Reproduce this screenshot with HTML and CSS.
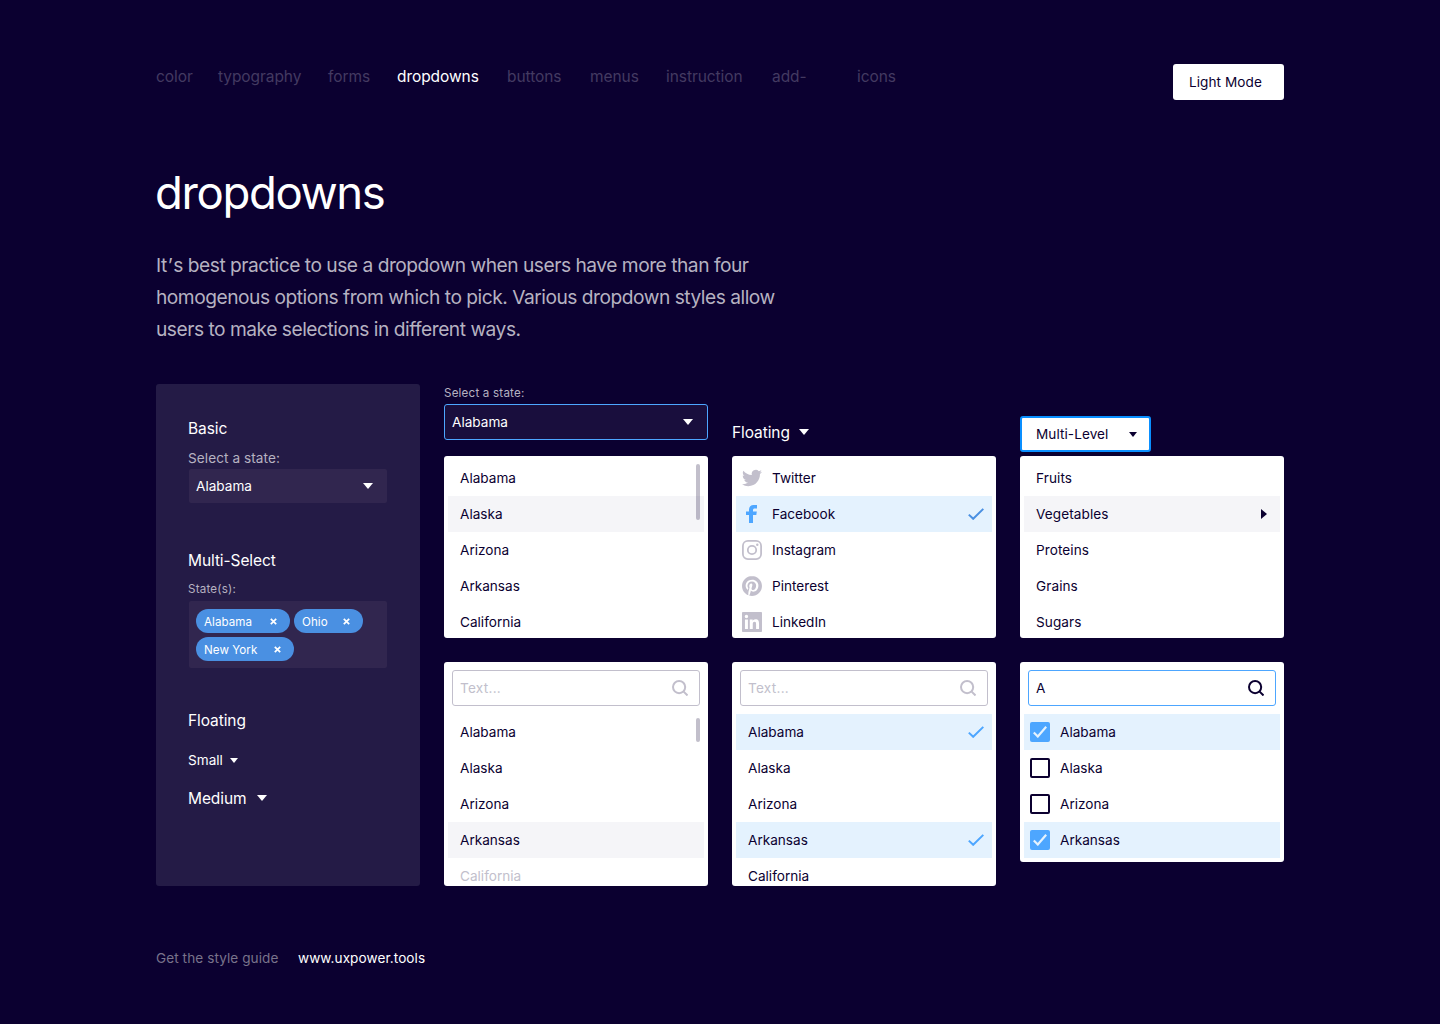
FILE: index.html
```html
<!DOCTYPE html>
<html lang="en">
<head>
<meta charset="utf-8">
<title>dropdowns</title>
<link rel="stylesheet" href="styles.css">
</head>
<body>
<svg class="sprite" aria-hidden="true">
  <symbol id="down" viewBox="0 0 10 6"><path d="M0 0h10L5 6z"/></symbol>
  <symbol id="right" viewBox="0 0 6 10"><path d="M0 0v10l6-5z"/></symbol>
  <symbol id="x" viewBox="0 0 7 7"><path d="M.8 .8l5.4 5.4M6.2 .8L.8 6.2" fill="none" stroke="currentColor" stroke-width="1.7"/></symbol>
  <symbol id="check" viewBox="0 0 16 12"><path d="M.8 6.6l4.4 4.2L15.3 .9" fill="none" stroke="currentColor" stroke-width="2"/></symbol>
  <symbol id="tick" viewBox="0 0 14 12"><path d="M.8 6.5l4 4L13.2 .8" fill="none" stroke="currentColor" stroke-width="2.2"/></symbol>
  <symbol id="search" viewBox="0 0 16 16"><g fill="none" stroke="currentColor" stroke-width="2"><circle cx="7.1" cy="7.1" r="6.1"/><path d="M11.4 11.4l4.1 4.1"/></g></symbol>
  <symbol id="twitter" viewBox="0 0 24 24"><path d="M23.953 4.57a10 10 0 01-2.825.775 4.958 4.958 0 002.163-2.723c-.951.555-2.005.959-3.127 1.184a4.92 4.92 0 00-8.384 4.482C7.69 8.095 4.067 6.13 1.64 3.162a4.822 4.822 0 00-.666 2.475c0 1.71.87 3.213 2.188 4.096a4.904 4.904 0 01-2.228-.616v.06a4.923 4.923 0 003.946 4.827 4.996 4.996 0 01-2.212.085 4.936 4.936 0 004.604 3.417 9.867 9.867 0 01-6.102 2.105c-.39 0-.779-.023-1.17-.067a13.995 13.995 0 007.557 2.209c9.053 0 13.998-7.496 13.998-13.985 0-.21 0-.42-.015-.63A9.935 9.935 0 0024 4.59z"/></symbol>
  <symbol id="facebook" viewBox="0 0 11 18"><path d="M3 18V10H0V6.6h3V4.8C3 1.6 4.8 0 7.6 0H11v3.4H8.8C7.5 3.4 7 4 7 5v1.6h3.8L10.3 10H7v8z"/></symbol>
  <symbol id="instagram" viewBox="0 0 20 20"><g fill="none" stroke="currentColor" stroke-width="1.8"><rect x=".9" y=".9" width="18.2" height="18.2" rx="5"/><circle cx="10" cy="10" r="4.2"/></g><circle cx="15.3" cy="4.7" r="1.2"/></symbol>
  <symbol id="pinterest" viewBox="0 0 24 24"><path d="M12.017 0C5.396 0 .029 5.367.029 11.987c0 5.079 3.158 9.417 7.618 11.162-.105-.949-.199-2.403.041-3.439.219-.937 1.406-5.957 1.406-5.957s-.359-.72-.359-1.781c0-1.663.967-2.911 2.168-2.911 1.024 0 1.518.769 1.518 1.688 0 1.029-.653 2.567-.992 3.992-.285 1.193.6 2.165 1.775 2.165 2.128 0 3.768-2.245 3.768-5.487 0-2.861-2.063-4.869-5.008-4.869-3.41 0-5.409 2.562-5.409 5.199 0 1.033.394 2.143.889 2.741.099.12.112.225.085.345-.09.375-.293 1.199-.334 1.363-.053.225-.172.271-.401.165-1.495-.69-2.433-2.878-2.433-4.646 0-3.776 2.748-7.252 7.92-7.252 4.158 0 7.392 2.967 7.392 6.923 0 4.135-2.607 7.462-6.233 7.462-1.214 0-2.354-.629-2.758-1.379l-.749 2.848c-.269 1.045-1.004 2.352-1.498 3.146 1.123.345 2.306.535 3.55.535 6.607 0 11.985-5.365 11.985-11.987C23.97 5.39 18.592.026 11.985.026L12.017 0z"/></symbol>
  <symbol id="linkedin" viewBox="0 0 24 24"><path d="M20.447 20.452h-3.554v-5.569c0-1.328-.027-3.037-1.852-3.037-1.853 0-2.136 1.445-2.136 2.939v5.667H9.351V9h3.414v1.561h.046c.477-.9 1.637-1.85 3.37-1.85 3.601 0 4.267 2.37 4.267 5.455v6.286zM5.337 7.433a2.062 2.062 0 01-2.063-2.065 2.064 2.064 0 112.063 2.065zm1.782 13.019H3.555V9h3.564v11.452zM23 0H1C.4 0 0 .4 0 1v22c0 .6.4 1 1 1h22c.6 0 1-.4 1-1V1c0-.6-.4-1-1-1z"/></symbol>
</svg>

<div class="page">
  <header class="top">
    <nav class="nav">
      <a>color</a><a>typography</a><a>forms</a><a class="active">dropdowns</a><a>buttons</a><a>menus</a><a>instruction</a><a>add-</a><a>icons</a>
    </nav>
    <button class="mode">Light Mode</button>
  </header>

  <h1>dropdowns</h1>
  <p class="intro">It<span class="apostrophe">’</span>s best practice to use a dropdown when users have more than four<br>homogenous options from which to pick. Various dropdown styles allow<br>users to make selections in different ways.</p>

  <main class="board">
    <section class="panel">
      <h2>Basic</h2>
      <label class="label label-md">Select a state:</label>
      <div class="field">Alabama<svg class="caret"><use href="#down"/></svg></div>

      <h2 class="multi">Multi-Select</h2>
      <label class="label label-sm">State(s):</label>
      <div class="tags">
        <span class="tag">Alabama<svg class="x"><use href="#x"/></svg></span>
        <span class="tag ohio">Ohio<svg class="x"><use href="#x"/></svg></span>
        <span class="tag york">New York<svg class="x"><use href="#x"/></svg></span>
      </div>

      <h2 class="float">Floating</h2>
      <div class="trigger small">Small<svg class="caret caret-sm"><use href="#down"/></svg></div>
      <div class="trigger medium"><span>Medium</span><svg class="caret"><use href="#down"/></svg></div>
    </section>

    <section class="column">
      <div class="head">
        <label class="label label-sm above">Select a state:</label>
        <div class="field open">Alabama<svg class="caret"><use href="#down"/></svg></div>
      </div>
      <div class="menu">
        <ul>
          <li>Alabama</li>
          <li class="hover">Alaska</li>
          <li>Arizona</li>
          <li>Arkansas</li>
          <li>California</li>
        </ul>
        <span class="scrollbar"></span>
      </div>
      <div class="menu tall">
        <div class="search">Text...<svg><use href="#search"/></svg></div>
        <ul>
          <li>Alabama</li>
          <li>Alaska</li>
          <li>Arizona</li>
          <li class="hover">Arkansas</li>
          <li class="faded">California</li>
        </ul>
        <span class="scrollbar short"></span>
      </div>
    </section>

    <section class="column">
      <div class="head">
        <div class="trigger lone"><span>Floating</span><svg class="caret"><use href="#down"/></svg></div>
      </div>
      <ul class="menu icons">
        <li><svg class="icon"><use href="#twitter"/></svg>Twitter</li>
        <li class="selected"><svg class="icon fb"><use href="#facebook"/></svg>Facebook<svg class="check deep"><use href="#check"/></svg></li>
        <li><svg class="icon"><use href="#instagram"/></svg>Instagram</li>
        <li><svg class="icon"><use href="#pinterest"/></svg>Pinterest</li>
        <li><svg class="icon"><use href="#linkedin"/></svg>LinkedIn</li>
      </ul>
      <div class="menu tall">
        <div class="search">Text...<svg><use href="#search"/></svg></div>
        <ul>
          <li class="selected">Alabama<svg class="check"><use href="#check"/></svg></li>
          <li>Alaska</li>
          <li>Arizona</li>
          <li class="selected">Arkansas<svg class="check"><use href="#check"/></svg></li>
          <li>California</li>
        </ul>
      </div>
    </section>

    <section class="column">
      <div class="head">
        <button class="level">Multi-Level<svg class="caret caret-sm"><use href="#down"/></svg></button>
      </div>
      <ul class="menu foods">
        <li>Fruits</li>
        <li class="hover">Vegetables<svg class="arrow"><use href="#right"/></svg></li>
        <li>Proteins</li>
        <li>Grains</li>
        <li>Sugars</li>
      </ul>
      <div class="menu fit icons">
        <div class="search focus">A<svg><use href="#search"/></svg></div>
        <ul>
          <li class="selected"><span class="box on"><svg><use href="#tick"/></svg></span>Alabama</li>
          <li><span class="box"></span>Alaska</li>
          <li><span class="box"></span>Arizona</li>
          <li class="selected"><span class="box on"><svg><use href="#tick"/></svg></span>Arkansas</li>
        </ul>
      </div>
    </section>
  </main>

  <footer class="foot"><span>Get the style guide</span><a>www.uxpower.tools</a></footer>
</div>
</body>
</html>
```
FILE: styles.css
```css
:root {
  --ink: #0b0030;
  --sky: #4da6ff;
  --mist: #c2bfcc;
}

* { box-sizing: border-box; }

body {
  margin: 0;
  background: var(--ink);
  color: #fff;
  font: 13.6px/20px Inter, "Liberation Sans", sans-serif;
}

h1, h2, p, ul { margin: 0; padding: 0; font-weight: 400; }
ul { list-style: none; }
svg { display: block; fill: currentColor; flex: none; }
button { font: inherit; border: 0; text-align: left; }
.sprite { position: absolute; width: 0; height: 0; }

.page { width: 1128px; margin: 0 auto; padding-top: 64px; }

.top { display: flex; justify-content: space-between; height: 36px; }
.nav {
  display: grid;
  grid-template-columns: 62px 110px 69px 110px 83px 76px 106px 85px 60px;
  padding-top: 1px;
  font-size: 15.5px;
  line-height: 24px;
  letter-spacing: -.07px;
  color: #433a61;
}
.nav .active { color: #fff; }
.mode {
  width: 111px;
  padding: 0 16px;
  border-radius: 3px;
  background: #fff;
  color: var(--ink);
  letter-spacing: .06px;
}

h1 { margin: 64px 0 0 -1px; font-size: 45.5px; line-height: 58px; letter-spacing: -1.37px; }
.intro {
  margin-top: 27px;
  font-size: 19.2px;
  line-height: 32px;
  letter-spacing: -.49px;
  color: #b6b2c1;
  white-space: nowrap;
}
.apostrophe { padding: 0 1px; }

.board {
  display: grid;
  grid-template-columns: repeat(4, 264px);
  gap: 24px;
  margin-top: 39px;
}

.panel {
  display: flex;
  flex-direction: column;
  height: 502px;
  padding: 33px 32px 31px;
  border-radius: 3px;
  background: #241b46;
}
h2 { font-size: 15.5px; line-height: 24px; letter-spacing: -.09px; }
.label { display: block; color: #b6b2c1; }
.label-md { margin-top: 7px; letter-spacing: .07px; }
.label-sm { font-size: 11.6px; line-height: 16px; letter-spacing: .2px; }
.above { padding-top: 1px; }
.field {
  display: flex;
  align-items: center;
  justify-content: space-between;
  width: 198px;
  height: 34px;
  margin: 1px 0 0 1px;
  padding: 0 14px 0 7px;
  border-radius: 2px;
  background: #31264f;
}
.field.open {
  width: 264px;
  height: 36px;
  margin: 3px 0 0;
  border: 1px solid var(--sky);
  border-radius: 3px;
  background: #190e3d;
}
.caret { width: 10px; height: 6px; }
.caret-sm { width: 8px; height: 5px; }

.multi { margin-top: 46px; }
.multi + .label { margin-top: 8px; }
.tags {
  display: flex;
  flex-wrap: wrap;
  align-content: flex-start;
  gap: 4px;
  width: 198px;
  height: 67px;
  margin: 4px 0 0 1px;
  padding: 8px 7px;
  border-radius: 2px;
  background: #31264f;
}
.tag {
  display: flex;
  align-items: center;
  justify-content: space-between;
  width: 94px;
  height: 24px;
  padding: 1px 13px 0 8px;
  border-radius: 12px;
  background: #4a90e2;
  font-size: 11.6px;
  letter-spacing: .06px;
}
.ohio { width: 69px; }
.york { width: 98px; }
.x { width: 7px; height: 7px; margin-top: -1px; }

.float { margin-top: 41px; }
.trigger { display: flex; align-items: center; }
.small { gap: 7px; margin-top: 17px; }
.medium, .lone { font-size: 15.5px; line-height: 24px; letter-spacing: -.09px; }
.medium span, .lone span { padding-top: 1px; margin-bottom: -1px; }
.medium { gap: 10.5px; margin-top: 16px; }

.column { display: flex; flex-direction: column; gap: 24px; }
.head { height: 72px; margin-bottom: -24px; }
.lone { gap: 9px; padding-top: 36px; }
.level {
  display: flex;
  align-items: center;
  justify-content: space-between;
  width: 131px;
  height: 36px;
  margin-top: 32px;
  padding: 0 12px 0 14px;
  border: 2px solid #0a8fff;
  border-radius: 3px;
  background: #fff;
  color: var(--ink);
  letter-spacing: .06px;
}

.menu {
  position: relative;
  height: 182px;
  padding: 4px;
  overflow: hidden;
  border-radius: 3px;
  background: #fff;
  color: var(--ink);
}
.tall { height: 224px; }
.fit { height: 200px; }
.foods { letter-spacing: .08px; }
.menu li { display: flex; align-items: center; height: 36px; padding: 0 8px 0 12px; }
.icons li { gap: 10px; padding-left: 6px; }
.menu .hover { background: #f5f5f8; }
.menu .selected { background: #e4f2fe; }
.menu .faded { color: var(--mist); }

.icon { width: 20px; height: 20px; color: var(--mist); }
.icon.fb { width: 11px; height: 18px; margin: 0 5px 0 4px; color: var(--sky); }
.check { width: 16px; height: 12px; margin-left: auto; color: var(--sky); }
.deep { color: #4a90e2; }
.arrow { width: 6px; height: 10px; margin: 0 5px 0 auto; }

.scrollbar {
  position: absolute;
  top: 8px;
  right: 8px;
  width: 4px;
  height: 56px;
  border-radius: 2px;
  background: rgba(11, 0, 48, .25);
}
.scrollbar.short { top: 56px; height: 24px; }

.search {
  display: flex;
  align-items: center;
  justify-content: space-between;
  height: 36px;
  margin: 4px 4px 8px;
  padding: 0 11px 0 7px;
  border: 1px solid var(--mist);
  border-radius: 3px;
  color: var(--mist);
  letter-spacing: .25px;
}
.search svg { width: 16px; height: 16px; }
.search.focus { border-color: var(--sky); color: var(--ink); }

.box { width: 20px; height: 20px; border: 2px solid var(--ink); border-radius: 2px; }
.box.on {
  display: flex;
  align-items: center;
  justify-content: center;
  border: 0;
  background: var(--sky);
  color: #e4f2fe;
}
.box svg { width: 14px; height: 12px; }

.foot { display: flex; gap: 19.5px; margin-top: 62px; letter-spacing: .07px; }
.foot span { color: #79738b; }
```
